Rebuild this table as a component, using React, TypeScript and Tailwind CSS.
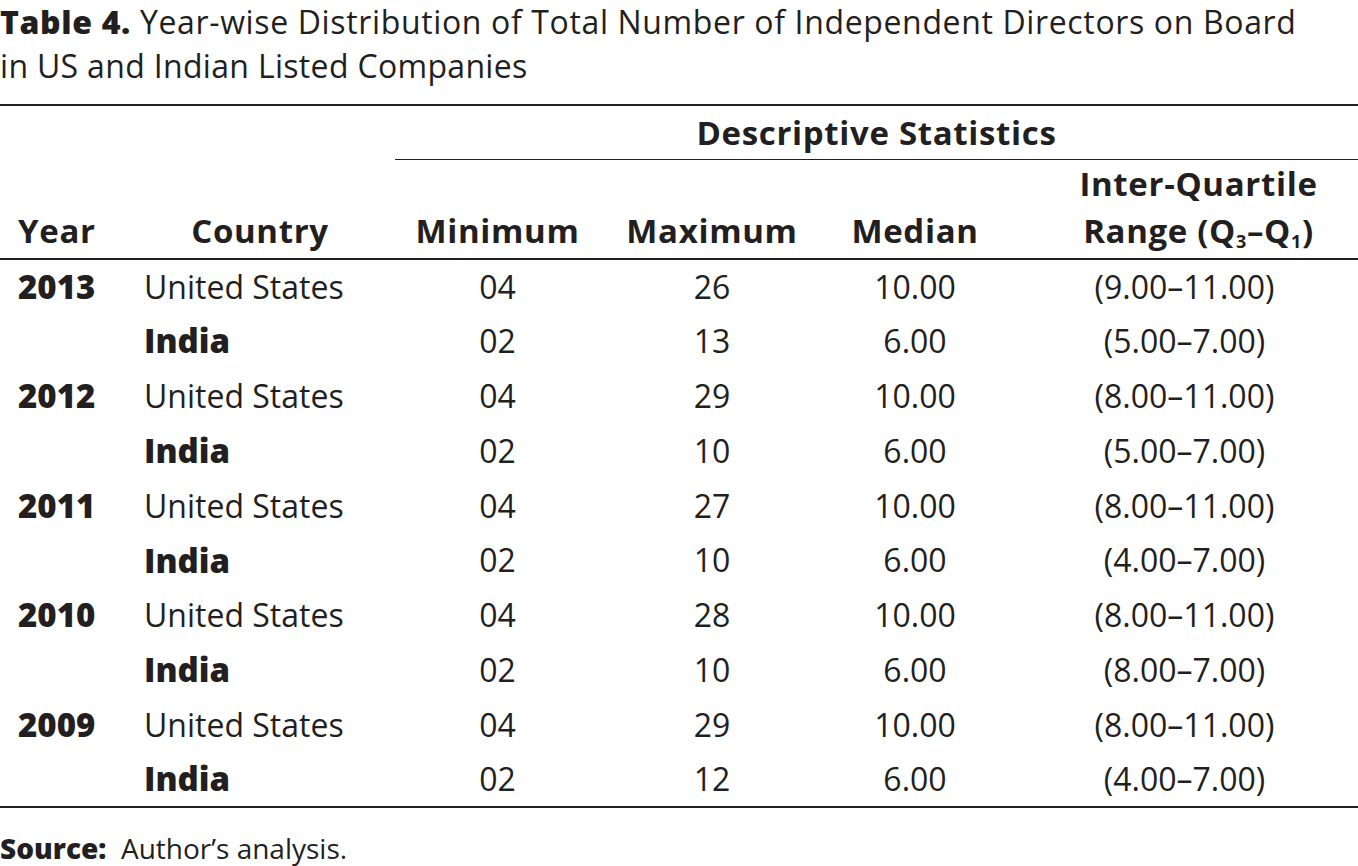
const rows = [
  { year: "2013", country: "United States", min: "04", max: "26", median: "10.00", iqr: "(9.00–11.00)" },
  { year: "", country: "India", min: "02", max: "13", median: "6.00", iqr: "(5.00–7.00)" },
  { year: "2012", country: "United States", min: "04", max: "29", median: "10.00", iqr: "(8.00–11.00)" },
  { year: "", country: "India", min: "02", max: "10", median: "6.00", iqr: "(5.00–7.00)" },
  { year: "2011", country: "United States", min: "04", max: "27", median: "10.00", iqr: "(8.00–11.00)" },
  { year: "", country: "India", min: "02", max: "10", median: "6.00", iqr: "(4.00–7.00)" },
  { year: "2010", country: "United States", min: "04", max: "28", median: "10.00", iqr: "(8.00–11.00)" },
  { year: "", country: "India", min: "02", max: "10", median: "6.00", iqr: "(8.00–7.00)" },
  { year: "2009", country: "United States", min: "04", max: "29", median: "10.00", iqr: "(8.00–11.00)" },
  { year: "", country: "India", min: "02", max: "12", median: "6.00", iqr: "(4.00–7.00)" },
]

export default function App() {
  return (
    <div className="h-[866px] w-[1358px] overflow-hidden bg-white font-['Open_Sans','Liberation_Sans',sans-serif] text-[#231f20]">
      <h1 className="h-[104px] text-[32px] leading-[44px]">
        <span className="block whitespace-nowrap tracking-[0.02em]">
          <b className="font-extrabold">Table 4.</b> Year-wise Distribution of Total Number of Independent Directors on Board
        </span>
        <span className="block whitespace-nowrap tracking-[0.01em]">in US and Indian Listed Companies</span>
      </h1>

      <table className="w-full table-fixed border-collapse text-[32px]">
        <colgroup>
          <col className="w-[130px]" />
          <col className="w-[260px]" />
          <col className="w-[215px]" />
          <col className="w-[214px]" />
          <col className="w-[192px]" />
          <col />
        </colgroup>
        <thead className="text-[33px] font-extrabold tracking-[0.02em]">
          <tr className="h-[55px] border-t-2 border-[#231f20]">
            <th colSpan={2} />
            <th colSpan={4} className="p-0 align-middle">
              <div className="ml-[5px] flex h-[54px] items-center justify-center border-b-[1.5px] border-[#231f20]">
                Descriptive Statistics
              </div>
            </th>
          </tr>
          <tr className="h-[98px] border-b-2 border-[#231f20] leading-[47px]">
            <th className="pb-[4px] pl-[18px] text-left align-bottom">Year</th>
            <th className="pb-[4px] text-center align-bottom">Country</th>
            <th className="pb-[4px] text-center align-bottom">Minimum</th>
            <th className="pb-[4px] text-center align-bottom">Maximum</th>
            <th className="pb-[4px] text-center align-bottom">Median</th>
            <th className="pb-[4px] pl-[28px] text-center align-bottom">
              Inter-Quartile
              <br />
              Range (Q<sub className="text-[18px]">3</sub>–Q<sub className="text-[18px]">1</sub>)
            </th>
          </tr>
        </thead>
        <tbody className="border-b-2 border-[#231f20]">
          {rows.map((r, i) => (
            <tr key={i} className="h-[54.8px]">
              <td className="pl-[18px] text-[33px] font-extrabold">{r.year}</td>
              <td className={r.year ? "pl-[14px]" : "pl-[14px] text-[33px] font-extrabold"}>{r.country}</td>
              <td className="text-center">{r.min}</td>
              <td className="text-center">{r.max}</td>
              <td className="text-center">{r.median}</td>
              <td className="text-center">{r.iqr}</td>
            </tr>
          ))}
        </tbody>
      </table>

      <p className="mt-[24px] text-[28px] leading-[32px]">
        <b className="font-extrabold">Source:</b>&nbsp; Author’s analysis.
      </p>
    </div>
  )
}
